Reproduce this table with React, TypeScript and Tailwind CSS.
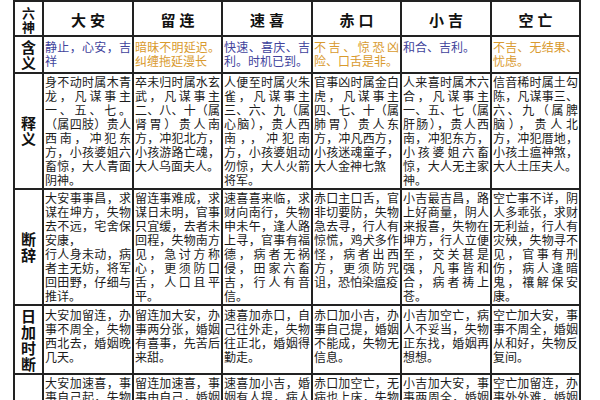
import React from "react";

const FONT = { fontFamily: '"Noto Sans CJK SC", "Noto Sans", sans-serif' };

const headers = ["大安", "留连", "速喜", "赤口", "小吉", "空亡"];

const meaning: { lines: string[]; good: boolean }[] = [
  { lines: ["静止，心安，吉", "祥"], good: true },
  { lines: ["暗昧不明延迟。", "纠缠拖延漫长"], good: false },
  { lines: ["快速、喜庆、吉", "利。时机已到。"], good: true },
  { lines: ["不吉、惊恐凶", "险、口舌是非。"], good: false },
  { lines: ["和合、吉利。"], good: true },
  { lines: ["不吉、无结果、", "忧虑。"], good: false },
];

const explain: string[][] = [
  ["身不动时属木青", "龙，凡谋事主", "一、五、七。", "（属四肢）贵人", "西南，冲犯东", "方，小孩婆姐六", "畜惊，大人青面", "阴神。"],
  ["卒未归时属水玄", "武，凡谋事主", "二、八、十（属", "肾胃）贵人南", "方，冲犯北方，", "小孩游路亡魂，", "大人乌面夫人。"],
  ["人便至时属火朱", "雀，凡谋事主", "三、六、九（属", "心脑），贵人西", "南，，冲犯南", "方，小孩婆姐动", "勿惊，大人火箭", "将军。"],
  ["官事凶时属金白", "虎，凡谋事主", "四、七、十（属", "肺胃）贵人东", "方，冲凡西方，", "小孩迷魂童子，", "大人金神七煞"],
  ["人来喜时属木六", "合，凡谋事主", "一、五、七（属", "肝肠），贵人西", "南，冲犯东方，", "小孩婆姐六畜", "惊，大人无主家", "神。"],
  ["信音稀时属土勾", "陈，凡谋事三、", "六、九（属脾", "脑），贵人北", "方，冲犯厝地，", "小孩土瘟神煞，", "大人土压夫人。"],
];

const judge: string[][] = [
  ["大安事事昌，求", "谋在坤方，失物", "去不远，宅舍保", "~安康，", "行人身未动，病", "者主无妨，将军", "回田野，仔细与", "推详。"],
  ["留连事难成，求", "谋日未明，官事", "只宜缓，去者未", "回程，失物南方", "见，急讨方称", "心，更须防口", "舌，人口且平", "平。"],
  ["速喜喜来临，求", "财向南行，失物", "申未午，逢人路", "上寻，官事有福", "德，病者无祸", "侵，田家六畜", "吉，行人有音", "信。"],
  ["赤口主口舌，官", "非切要防，失物", "急去寻，行人有", "惊慌，鸡犬多作", "怪，病者出西", "方，更须防咒", "诅，恐怕染瘟疫"],
  ["小吉最吉昌，路", "上好商量，阴人", "来报喜，失物在", "坤方，行人立便", "至，交关甚是", "强，凡事皆和", "合，病者祷上", "苍。"],
  ["空亡事不详，阴", "人多乖张，求财", "无利益，行人有", "灾殃，失物寻不", "见，官事有刑", "伤，病人逢暗", "鬼，禳解保安", "康。"],
];

const dayTime: string[][] = [
  ["大安加留连，办", "事不周全，失物", "西北去，婚姻晚", "几天。"],
  ["留连加大安，办", "事两分张，婚姻", "有喜事，先苦后", "来甜。"],
  ["速喜加赤口，自", "己往外走，失物", "往正北，婚姻得", "勤走。"],
  ["赤口加小吉，办", "事自己提，婚姻", "不能成，失物无", "信息。"],
  ["小吉加空亡，病", "人不妥当，失物", "正东找，婚姻再", "想想。"],
  ["空亡加大安，事", "事不周全，婚姻", "从和好，失物反", "复间。"],
];

const lastRow: string[][] = [
  ["大安加速喜，事", "事自己起，失物", "去不远，婚姻", "成。"],
  ["留连加速喜，事", "事由自己，婚姻", "有喜事，失物", "见。"],
  ["速喜加小吉，婚", "姻有人提，病人", "就会好，失物", "回。"],
  ["赤口加空亡，无", "病也上床，失物", "难寻找，婚姻", "空。"],
  ["小吉加大安，事", "事两周全，婚姻", "能成就，失物", "见。"],
  ["空亡加留连，办", "事外外难，婚姻", "难成就，失物", "无。"],
];

function Lines({ lines, color }: { lines: string[]; color?: string }) {
  return (
    <>
      {lines.map((raw, i) => {
        const plain = raw.startsWith("~");
        const text = plain ? raw.slice(1) : raw;
        const justify = !plain && i < lines.length - 1;
        return (
          <div
            key={i}
            className={
              justify
                ? "text-justify [text-align-last:justify]"
                : "text-left"
            }
            style={color ? { color } : undefined}
          >
            {text}
          </div>
        );
      })}
    </>
  );
}

function Body({ lines, color, pt }: { lines: string[]; color?: string; pt?: string }) {
  return (
    <div
      className={`bg-white pl-[1px] pr-[1px] text-[12px] leading-[14px] text-[#1c1c1c] overflow-hidden ${pt ?? "pt-[1px]"}`}
    >
      <Lines lines={lines} color={color} />
    </div>
  );
}

function Label({ chars }: { chars: string[] }) {
  return (
    <div className="bg-white flex flex-col items-center justify-center text-[15px] leading-[16px] font-bold text-[#111]">
      {chars.map((c, i) => (
        <span key={i}>{c}</span>
      ))}
    </div>
  );
}

export default function App() {
  return (
    <div className="w-[600px] h-[400px] overflow-hidden bg-white" style={FONT}>
      <div className="ml-[13px] w-max grid grid-cols-[27px_88px_87px_88px_87px_88px_87px] grid-rows-[33px_35px_114px_114px_67px_60px] gap-[2px] p-[2px] bg-[#222]">
        {/* header */}
        <div className="bg-white flex flex-col items-center justify-center text-[13px] leading-[14px] font-bold text-[#111] pt-[2px]">
          <span>六</span>
          <span>神</span>
        </div>
        {headers.map((h) => (
          <div
            key={h}
            className="bg-white flex items-center justify-center pt-[3px] pl-[4px] text-[15px] font-bold tracking-[4px] text-[#111]"
          >
            {h}
          </div>
        ))}

        {/* 含义 */}
        <Label chars={["含", "义"]} />
        {meaning.map((m, i) => (
          <Body key={i} lines={m.lines} color={m.good ? "#41439c" : "#d99a2e"} pt="pt-[3px]" />
        ))}

        {/* 释义 */}
        <Label chars={["释", "义"]} />
        {explain.map((l, i) => (
          <Body key={i} lines={l} />
        ))}

        {/* 断辞 */}
        <Label chars={["断", "辞"]} />
        {judge.map((l, i) => (
          <Body key={i} lines={l} />
        ))}

        {/* 日加时断 */}
        <Label chars={["日", "加", "时", "断"]} />
        {dayTime.map((l, i) => (
          <Body key={i} lines={l} pt="pt-[2px]" />
        ))}

        {/* last partial row */}
        <div className="bg-white" />
        {lastRow.map((l, i) => (
          <Body key={i} lines={l} />
        ))}
      </div>
    </div>
  );
}
